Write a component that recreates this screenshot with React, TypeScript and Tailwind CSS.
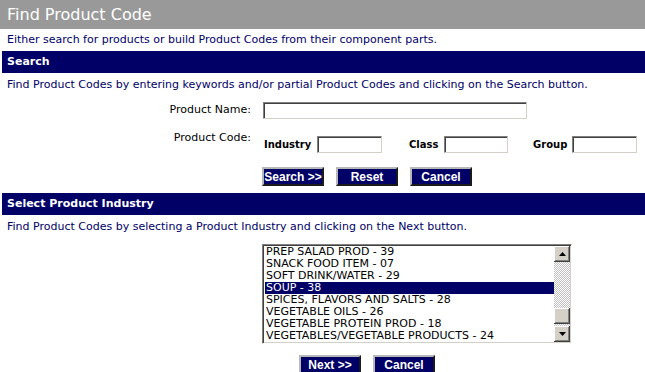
const industries = [
  "PREP SALAD PROD - 39",
  "SNACK FOOD ITEM - 07",
  "SOFT DRINK/WATER - 29",
  "SOUP - 38",
  "SPICES, FLAVORS AND SALTS - 28",
  "VEGETABLE OILS - 26",
  "VEGETABLE PROTEIN PROD - 18",
  "VEGETABLES/VEGETABLE PRODUCTS - 24",
];

const inputClass =
  "block h-[17px] bg-white border border-t-[#808080] border-l-[#808080] border-b-[#d4d0c8] border-r-[#d4d0c8] shadow-[inset_1px_1px_0_#404040] outline-none";

const bevel =
  "bg-[#d4d0c8] shadow-[inset_-1px_-1px_0_#404040,inset_1px_1px_0_#ffffff,inset_-2px_-2px_0_#808080,inset_2px_2px_0_#d4d0c8]";

const dither =
  "bg-[image:repeating-conic-gradient(#c0c0c0_0_25%,#ffffff_0_50%)] bg-[length:2px_2px]";

function NavButton({ label }: { label: string }) {
  return (
    <button
      type="button"
      className="flex h-[19px] w-[62px] items-center justify-center border-2 border-t-[#b8b8b8] border-l-[#b8b8b8] border-r-[#1a1a1a] border-b-[#1a1a1a] bg-[#000066] font-['Liberation_Sans',Arial,sans-serif] text-[12px] font-bold leading-none text-white"
    >
      {label}
    </button>
  );
}

function SectionBar({ title }: { title: string }) {
  return (
    <div className="ml-[2px] flex h-[22px] items-center bg-[#000066] pl-[5px] text-[11px] font-bold text-white">
      {title}
    </div>
  );
}

function Arrow({ up }: { up?: boolean }) {
  return (
    <svg width="7" height="4" viewBox="0 0 7 4" className="block">
      <path d={up ? "M3.5 0 L7 4 L0 4 Z" : "M0 0 L7 0 L3.5 4 Z"} fill="#000" />
    </svg>
  );
}

export default function App() {
  return (
    <div className="w-[645px] bg-white font-['DejaVu_Sans',Verdana,sans-serif] text-[#000066]">
      <div className="flex h-[29px] items-center bg-[#999999] pl-[7px] text-[16px] text-white">
        Find Product Code
      </div>
      <div className="flex h-[22px] items-center pl-[7px] text-[11px]">
        Either search for products or build Product Codes from their component parts.
      </div>

      <SectionBar title="Search" />
      <div className="flex h-[24px] items-center pl-[7px] text-[11px]">
        Find Product Codes by entering keywords and/or partial Product Codes and clicking on the Search button.
      </div>

      <div className="mt-[5px] flex items-center text-[11px] text-black">
        <div className="w-[251px] text-right">Product Name:</div>
        <input className={`${inputClass} ml-[12px] w-[264px]`} />
      </div>

      <div className="mt-[13px] flex items-start text-[11px] text-black">
        <div className="w-[251px] text-right leading-[12px]">Product Code:</div>
        <div className="ml-[13px] mt-[4px] flex items-center text-[10px] font-bold">
          <span className="w-[53px]">Industry</span>
          <input className={`${inputClass} w-[65px]`} />
          <span className="ml-[27px] w-[35px]">Class</span>
          <input className={`${inputClass} w-[64px]`} />
          <span className="ml-[25px] w-[39px]">Group</span>
          <input className={`${inputClass} w-[65px]`} />
        </div>
      </div>

      <div className="ml-[262px] mt-[14px] flex gap-[12px]">
        <NavButton label="Search >>" />
        <NavButton label="Reset" />
        <NavButton label="Cancel" />
      </div>

      <div className="mt-[7px]">
        <SectionBar title="Select Product Industry" />
      </div>
      <div className="flex h-[24px] items-center pl-[7px] text-[11px]">
        Find Product Codes by selecting a Product Industry and clicking on the Next button.
      </div>

      <div className="ml-[262px] mt-[5px] flex h-[100px] w-[310px] border border-t-[#808080] border-l-[#808080] border-b-[#ffffff] border-r-[#ffffff] shadow-[inset_1px_1px_0_#404040,inset_-1px_-1px_0_#d4d0c8]">
        <div className="flex flex-1 flex-col py-[1px] pl-[2px] text-[11px] text-black">
          {industries.map((item) => (
            <div
              key={item}
              className={`h-[12px] whitespace-nowrap pl-[1px] leading-[12px] ${item === "SOUP - 38" ? "bg-[#000066] text-white" : ""}`}
            >
              {item}
            </div>
          ))}
        </div>
        <div className="my-[1px] mr-[1px] flex w-[16px] flex-col">
          <div className={`flex h-[16px] items-center justify-center ${bevel}`}>
            <Arrow up />
          </div>
          <div className={`h-[46px] ${dither}`} />
          <div className={`h-[16px] ${bevel}`} />
          <div className={`h-[2px] ${dither}`} />
          <div className={`flex h-[16px] items-center justify-center ${bevel}`}>
            <Arrow />
          </div>
        </div>
      </div>

      <div className="ml-[299px] mt-[11px] flex gap-[12px]">
        <NavButton label="Next >>" />
        <NavButton label="Cancel" />
      </div>
    </div>
  );
}
